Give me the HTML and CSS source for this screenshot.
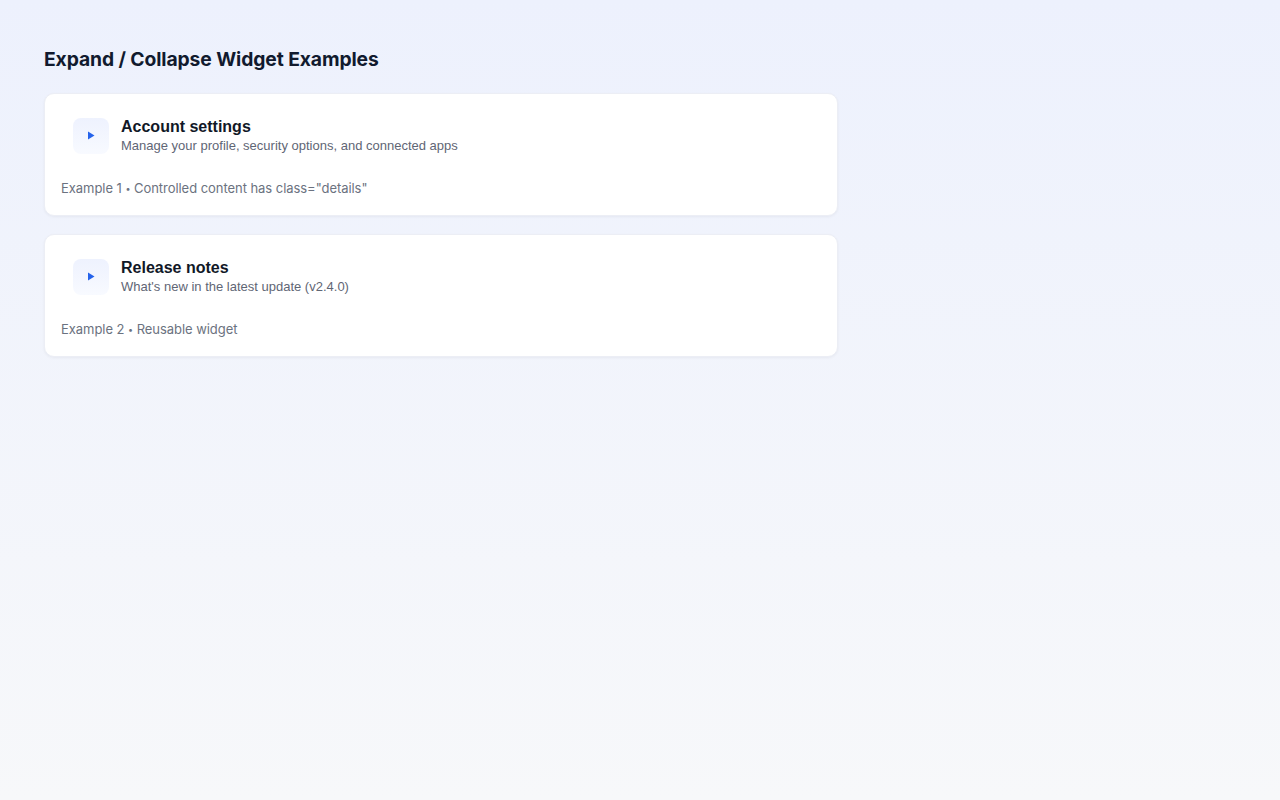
FILE: index.html
```html
<html>
	<head>
		<title>Expand / Collapse Widget Examples</title>
		<link rel="stylesheet" href="styles.css">
	</head>
	<body>
		<div class="page">

			<h1>Expand / Collapse Widget Examples</h1>

			<div class="card">
				<button class="toggle" aria-expanded="false">
					<span class="toggle-icon">
						<svg width="8" height="9" viewBox="0 0 8 9"><path d="M1 0.5 L7.5 4.5 L1 8.5 Z" fill="#2563eb"/></svg>
					</span>
					<span class="toggle-text">
						<span class="toggle-title">Account settings</span>
						<span class="toggle-sub">Manage your profile, security options, and connected apps</span>
					</span>
				</button>
				<div class="details" hidden>Profile, security, apps.</div>
				<p class="meta">Example 1 <span class="dot">&bull;</span> Controlled content has class="details"</p>
			</div> <!-- end .card -->

			<div class="card">
				<button class="toggle" aria-expanded="false">
					<span class="toggle-icon">
						<svg width="8" height="9" viewBox="0 0 8 9"><path d="M1 0.5 L7.5 4.5 L1 8.5 Z" fill="#2563eb"/></svg>
					</span>
					<span class="toggle-text">
						<span class="toggle-title">Release notes</span>
						<span class="toggle-sub">What's new in the latest update (v2.4.0)</span>
					</span>
				</button>
				<div class="details" hidden>Bug fixes and improvements.</div>
				<p class="meta">Example 2 <span class="dot">&bull;</span> Reusable widget</p>
			</div> <!-- end .card -->

		</div> <!-- end .page -->
	</body>
</html>
```

FILE: styles.css
```css
html, body {
	height: 100%;
}

body {
	margin: 0;
	font-family: Inter, "Liberation Sans", sans-serif;
	background: linear-gradient(180deg, #edf1fd 0%, #f7f8fa 100%);
	color: #111827;
}

.page {
	padding: 46px 44px;
}

h1 {
	margin: 0 0 21px;
	font-size: 19.3px;
	line-height: 26px;
	font-weight: 700;
	color: #111a2e;
	letter-spacing: -0.1px;
}

.card {
	box-sizing: border-box;
	width: 794px;
	background: #fff;
	border: 1px solid #eceef5;
	border-radius: 10px;
	box-shadow: 0 1px 3px rgba(17,24,39,0.05);
	padding: 15px 16px 17px;
	margin-bottom: 18px;
}

.toggle {
	display: flex;
	align-items: center;
	gap: 12px;
	width: 100%;
	padding: 8px 12px;
	border: 0;
	background: none;
	text-align: left;
	cursor: pointer;
	font-family: "Liberation Sans", Arial, sans-serif;
}

.toggle-icon {
	display: flex;
	align-items: center;
	justify-content: center;
	width: 36px;
	height: 36px;
	border-radius: 8px;
	background: linear-gradient(180deg, #eef2fe 0%, #f8faff 100%);
	flex-shrink: 0;
}

.toggle-text {
	display: flex;
	flex-direction: column;
	gap: 2px;
}

.toggle-title {
	font-size: 16px;
	line-height: 19px;
	font-weight: 700;
	color: #111827;
}

.toggle-sub {
	font-size: 13px;
	line-height: 16px;
	color: #5f6675;
}

.meta {
	margin: 17px 0 0;
	font-size: 13px;
	line-height: 18px;
	color: #6b7280;
	letter-spacing: -0.05px;
}

.meta .dot {
	font-size: 9px;
	vertical-align: 1px;
}
```
